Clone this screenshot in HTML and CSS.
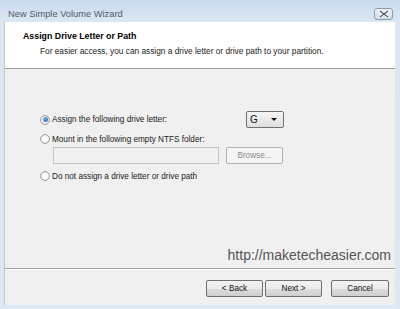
FILE: index.html
```html
<!DOCTYPE html>
<html>
<head>
<meta charset="utf-8">
<link rel="stylesheet" href="styles.css">
</head>
<body>
<div class="window">
  <div class="titlebar">
    <span class="title">New Simple Volume Wizard</span>
    <span class="close"><svg width="10" height="8" viewBox="0 0 10 8"><path d="M1 1 L9 7 M9 1 L1 7" stroke="#fff" stroke-width="3"/><path d="M1 1 L9 7 M9 1 L1 7" stroke="#555" stroke-width="1.2"/></svg></span>
  </div>
  <div class="client">
    <div class="header">
      <div class="h-title">Assign Drive Letter or Path</div>
      <div class="h-sub">For easier access, you can assign a drive letter or drive path to your partition.</div>
    </div>
    <div class="content">
      <div class="row r1">
        <span class="radio checked"></span><span class="lbl lbl-fixed">Assign the following drive letter:</span>
        <span class="select">G<span class="arrow"></span></span>
      </div>
      <div class="row r2">
        <span class="radio"></span><span class="lbl">Mount in the following empty NTFS folder:</span>
      </div>
      <div class="row r3">
        <span class="field"></span><span class="btn disabled browse">Browse...</span>
      </div>
      <div class="row r4">
        <span class="radio"></span><span class="lbl">Do not assign a drive letter or drive path</span>
      </div>
      <div class="watermark">http://maketecheasier.com</div>
    </div>
    <div class="footer">
      <span class="btn back">&lt; Back</span>
      <span class="btn next">Next &gt;</span>
      <span class="btn cancel">Cancel</span>
    </div>
  </div>
</div>
</body>
</html>
```

FILE: styles.css
```css
* { box-sizing: border-box; }
html, body { margin: 0; padding: 0; }
body {
  width: 400px; height: 309px; overflow: hidden;
  font-family: "Liberation Sans", Arial, sans-serif;
  font-size: 8.2px; color: #222;
}
.window {
  width: 400px; height: 309px;
  background: linear-gradient(to bottom, #c9d9ec 0px, #dbe6f3 20px, #dde8f4 100%);
  padding: 0 5px 4px 4px;
  display: flex; flex-direction: column;
}
.titlebar {
  height: 22px; flex: none;
  display: flex; align-items: center; justify-content: space-between;
  padding: 5px 2px 0 4px;
}
.title { font-size: 9.3px; color: #505a66; }
.close {
  width: 19px; height: 12px; margin-top: 1px;
  border: 1px solid #8c9aab; border-radius: 3px;
  background: linear-gradient(#eef3f9, #cfdbe9);
  display: flex; align-items: center; justify-content: center;
}
.client {
  flex: 1; background: #f0f0f0;
  display: flex; flex-direction: column;
  border-left: 1px solid #b9c7d8;
}
.header {
  height: 47px; background: #fff;
  border-bottom: 1px solid #a0a0a0;
  padding: 9px 0 0 18px;
}
.h-title { font-weight: bold; font-size: 8.8px; color: #000; }
.h-sub { margin: 5px 0 0 17px; font-size: 8.3px; color: #222; }
.content {
  flex: 1; position: relative;
  padding: 42px 0 0 35px;
  border-bottom: 1px solid #a0a0a0;
  box-shadow: 0 1px 0 #fff;
}
.row { display: flex; align-items: center; }
.r1 { height: 17px; }
.r2 { height: 14px; margin-top: 4px; }
.r3 { height: 18px; margin-top: 0; padding-left: 13px; }
.r4 { height: 14px; margin-top: 5px; }
.radio {
  width: 10px; height: 10px; border-radius: 50%;
  border: 1px solid #9aa0a6;
  background: radial-gradient(circle, #fdfdfd 30%, #dcdcdc 100%);
  margin-right: 2px; flex: none; position: relative;
}
.radio.checked::after {
  content: ""; position: absolute; left: 1.5px; top: 1.5px;
  width: 5px; height: 5px; border-radius: 50%;
  background: radial-gradient(circle at 40% 35%, #6fb3f0, #1b5fa8);
}
.lbl { font-size: 8.2px; color: #1a1a1a; }
.lbl-fixed { width: 194px; flex: none; }
.select {
  width: 38px; height: 17px;
  border: 1px solid #707070; border-radius: 2px;
  background: linear-gradient(#f6f6f6, #dedede);
  font-size: 10px; padding-left: 3px;
  display: flex; align-items: center; position: relative; color: #111;
}
.arrow {
  position: absolute; right: 6px; top: 6px;
  border-left: 3px solid transparent; border-right: 3px solid transparent;
  border-top: 3px solid #111;
}
.field {
  width: 166px; height: 17px;
  border: 1px solid #c4c4c4; background: #f0f0f0;
}
.btn {
  display: flex; align-items: center; justify-content: center;
  height: 17px; border: 1px solid #707070; border-radius: 2px;
  background: linear-gradient(#f3f3f3 0%, #ebebeb 50%, #dddddd 51%, #cfcfcf 100%);
  font-size: 8.2px; color: #111;
}
.btn.disabled {
  border-color: #adb2b5; background: #f4f4f4; color: #8a8a8a;
}
.browse { width: 57px; margin-left: 7px; }
.watermark {
  position: absolute; right: 4px; bottom: 5px;
  font-size: 14px; color: #555;
}
.footer {
  height: 36px; flex: none;
  display: flex; align-items: flex-start; justify-content: flex-end;
  padding: 11px 6px 0 0;
}
.back { width: 57px; }
.next { width: 57px; margin-left: 2px; }
.cancel { width: 58px; margin-left: 9px; }
```
